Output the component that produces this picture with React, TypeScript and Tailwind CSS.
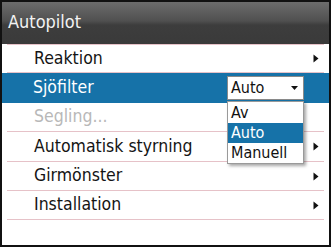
import type { ReactNode } from "react";

const font = "font-['DejaVu_Sans_Condensed','DejaVu_Sans',sans-serif]";

const RightArrow = () => (
  <svg width="6" height="9" viewBox="0 0 6 9" className="shrink-0">
    <path d="M0.5 0.5 L5.5 4.5 L0.5 8.5 Z" fill="#111" />
  </svg>
);

type RowProps = {
  label: string;
  h: string;
  arrow?: boolean;
  disabled?: boolean;
  children?: ReactNode;
};

const Row = ({ label, h, arrow, disabled, children }: RowProps) => (
  <div className={`mx-[5px] flex items-center border-b border-[#e6c2c8] pl-[27px] pr-[5px] ${h}`}>
    <span className={`flex-1 text-[17.5px] leading-none ${disabled ? "text-[#b8b8b8]" : "text-[#141414]"}`}>
      {label}
    </span>
    {arrow && <RightArrow />}
    {children}
  </div>
);

export default function App() {
  return (
    <div className={`relative h-[247px] w-[331px] overflow-hidden border-2 border-[#111] bg-white ${font}`}>
      <div className="flex h-[42px] items-center bg-[linear-gradient(#6c6c6c,#505050_45%,#3d3d3d_55%,#3a3a3a)] pb-[3px] pl-[6px]">
        <span className="text-[18px] leading-none text-[#f2f2f2]">Autopilot</span>
      </div>
      <div className="mx-[5px] h-px bg-[#e6c2c8]" />

      <Row label="Reaktion" h="h-[28px]" arrow />

      <div className="flex h-[30px] items-center bg-[#1672a8] pl-[31px] pr-[25px]">
        <span className="flex-1 text-[17.5px] leading-none text-white">Sjöfilter</span>
        <div className="flex h-[24px] w-[77px] items-center border border-[#8a8a8a] bg-white pl-[3px] pr-[5px]">
          <span className="flex-1 text-[16px] leading-none text-[#111]">Auto</span>
          <svg width="7" height="4" viewBox="0 0 7 4">
            <path d="M0 0 L7 0 L3.5 4 Z" fill="#111" />
          </svg>
        </div>
      </div>

      <Row label="Segling..." h="h-[29px]" disabled />
      <Row label="Automatisk styrning" h="h-[30px]" arrow />
      <Row label="Girmönster" h="h-[29px]" arrow />
      <Row label="Installation" h="h-[29px]" arrow />

      <div className="absolute left-[225px] top-[99px] w-[77px] border border-[#9a9a9a] bg-white shadow-[2px_2px_3px_rgba(0,0,0,0.35)]">
        <div className="flex h-[21px] items-center pl-[3px] text-[16px] leading-none text-[#111]">Av</div>
        <div className="flex h-[20px] items-center bg-[#1672a8] pl-[3px] text-[16px] leading-none text-white">Auto</div>
        <div className="flex h-[20px] items-center pl-[3px] text-[16px] leading-none text-[#111]">Manuell</div>
      </div>
    </div>
  );
}
